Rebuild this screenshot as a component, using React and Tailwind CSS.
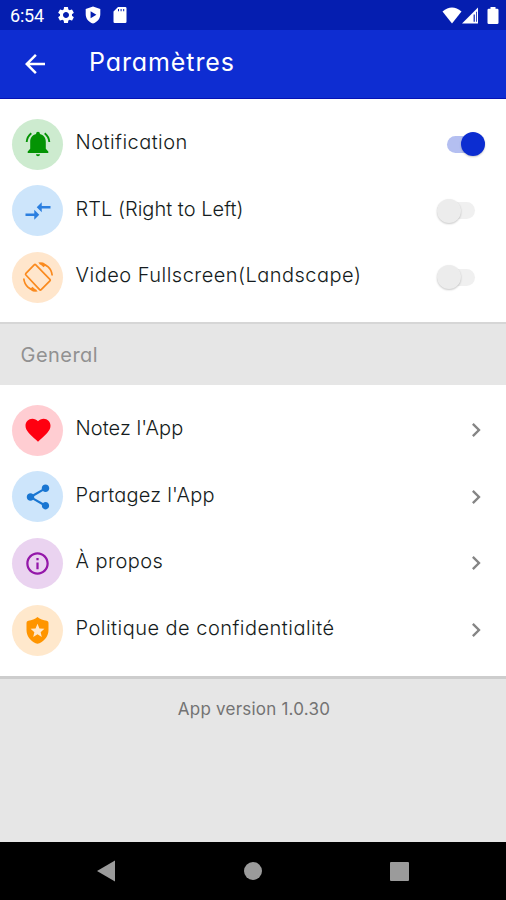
import React, { useState } from 'react';
import {
    MdArrowBack,
    MdChevronRight,
    MdCompareArrows,
    MdFavorite,
    MdInfoOutline,
    MdSettings,
    MdShare,
} from 'react-icons/md';

function BellRing() {
    return (
        <svg width="30" height="30" viewBox="0.5 0 30 30" fill="currentColor">
            <path d="M15.500 2.800c1.100 0 1.900.8 1.900 1.900v.4c3.700.9 5.900 3.900 5.900 7.600v7l2.500 2.800v1.400H5.200v-1.400l2.500-2.800v-7c0-3.700 2.200-6.700 5.900-7.600v-.4c0-1.100.8-1.900 1.900-1.900ZM13.500 25.200h4c0 1.200-.9 2-2 2s-2-.8-2-2Z" />
            <path d="M8.800 4.300C6.300 6.300 4.500 9.500 4.200 13M22.200 4.300C24.700 6.300 26.500 9.500 26.800 13" fill="none" stroke="currentColor" strokeWidth="1.900" />
        </svg>
    );
}

function RotateScreen() {
    return (
        <svg width="30" height="30" viewBox="0 0 30 30" fill="none" stroke="currentColor" strokeWidth="1.700">
            <path d="M11.200 2.900Q12 2.100 12.800 2.900L26.900 17.300Q27.700 18.100 26.900 18.900L18.200 27.600Q17.400 28.400 16.600 27.600L2.900 13Q2.100 12.200 2.900 11.400Z" strokeLinejoin="round" />
            <path d="M16.500 1.400C23.200 1.600 28.600 6.500 29.200 13.500M13.500 28.600C6.800 28.400 1.400 23.500.8 16.500" />
            <path d="M15.200.5h5l2.600 2.600-2.200 2.200Z M14.800 29.500h-5l-2.600-2.600 2.200-2.200Z" fill="currentColor" stroke="none" />
        </svg>
    );
}

function ShieldStar() {
    return (
        <svg width="29" height="29" viewBox="0 0 24 24" fill="currentColor">
            <path
                fillRule="evenodd"
                d="M12 .9C9.800 2.700 7.300 3.600 4.400 3.900Q2.900 4.100 2.900 5.600V11.500c0 5 3.200 9 7.500 11Q12 23.300 13.600 22.500c4.300-2 7.500-6 7.500-11V5.600Q21.100 4.100 19.600 3.900C16.700 3.600 14.200 2.700 12 .9ZM12 6.500l1.600 3.800 4.100.35-3.100 2.700.95 4L12 15.200l-3.550 2.150.95-4-3.100-2.700 4.100-.35Z"
            />
        </svg>
    );
}

function StatusBar() {
    return (
        <div className="flex h-[30px] shrink-0 items-center bg-[#051eb0] pl-[10px] pr-[6px] text-white">
            <span className="w-[46px] pt-[2px] font-['Roboto',sans-serif] text-[18px] leading-none tracking-[-0.2px]">6:54</span>
            <MdSettings size={20} />
            <svg width="16" height="18" viewBox="0 0 16 18" className="ml-[9px]" fill="currentColor">
                <path fillRule="evenodd" d="M8 .5 15.300 3v5.200c0 4.200-2.800 7.800-7.300 9.300C3.500 16 .7 12.400.7 8.200V3ZM5.600 5.200v7L11.400 8.700Z" />
            </svg>
            <svg width="14" height="16" viewBox="0 0 14 16" className="ml-[12px]" fill="currentColor">
                <path fillRule="evenodd" d="M5 0h7.200Q13.500 0 13.500 1.300v13.400Q13.500 16 12.200 16H1.800Q.5 16 .5 14.700V4.500ZM5 2v2.200h1V2ZM7.600 2v2.200h1V2ZM10.200 2v2.200h1V2Z" />
            </svg>
            <div className="ml-auto flex items-center">
                <svg width="20" height="17" viewBox="0 0 20 17" fill="currentColor">
                    <path d="M.5 4.500Q10-3.500 19.500 4.500L10 16.500Z" />
                </svg>
                <svg width="17" height="17" viewBox="0 0 17 17" fill="currentColor">
                    <path fillRule="evenodd" d="M0 16.500 16 .5v16ZM11.600 7.500v7.200h1.200V7.500ZM14 4.800v9.900h.8V4.800Z" />
                </svg>
                <svg width="12" height="17" viewBox="0 0 12 17" className="ml-[8px] mr-px" fill="currentColor">
                    <path d="M3.500 0h5v1.700h1.700q1.300 0 1.300 1.300v12.700q0 1.300-1.300 1.300H1.800Q.5 17 .5 15.700V3q0-1.300 1.300-1.300h1.700Z" />
                </svg>
            </div>
        </div>
    );
}

function Toggle({ checked, onChange }) {
    return (
        <button
            type="button"
            role="switch"
            aria-checked={checked}
            onClick={() => onChange(!checked)}
            className={`mr-[21px] flex h-6 w-[49px] items-center ${checked ? 'justify-end' : 'justify-start'}`}
        >
            <span className={`flex h-[17px] w-[38px] items-center rounded-full ${checked ? 'justify-end bg-[#b4bff1]' : 'ml-px justify-start bg-[#f0f0f0]'}`}>
                <span className={`h-6 w-6 shrink-0 rounded-full shadow-[0_1px_2px_rgba(0,0,0,0.22)] ${checked ? 'bg-[#0c2dd1]' : 'bg-[#ececec]'}`} />
            </span>
        </button>
    );
}

function Row({ icon, circle, label, labelClass, children }) {
    return (
        <div className="flex h-[66.6px] items-center pl-3">
            <div className={`flex h-[51px] w-[51px] items-center justify-center rounded-full ${circle}`}>
                {icon}
            </div>
            <span className={`mb-1 ml-[12.6px] whitespace-nowrap text-[20px] font-light leading-6 text-[#151c20] ${labelClass}`}>
                {label}
            </span>
            <div className="ml-auto flex">{children}</div>
        </div>
    );
}

const LINKS = [
    { label: "Notez l'App", labelClass: 'tracking-[0.05px]', circle: 'bg-[#ffcdd2] text-[#ff0010]', icon: <MdFavorite size={30} /> },
    { label: "Partagez l'App", labelClass: 'tracking-[0.22px]', circle: 'bg-[#cde5fb] text-[#1976d2]', icon: <MdShare size={30} /> },
    { label: 'À propos', labelClass: 'tracking-[0.45px]', circle: 'bg-[#ead3f0] text-[#9417a9]', icon: <MdInfoOutline size={27} /> },
    { label: 'Politique de confidentialité', labelClass: 'tracking-[0.47px]', circle: 'bg-[#ffe8cc] text-[#ff9500]', icon: <ShieldStar /> },
];

export default function App() {
    const [notifications, setNotifications] = useState(true);
    const [rtl, setRtl] = useState(false);
    const [landscape, setLandscape] = useState(false);

    return (
        <div className="flex h-[900px] w-[506px] flex-col overflow-hidden bg-[#e6e6e6] font-['Inter',sans-serif] [font-feature-settings:'cv11']">
            <StatusBar />
            <header className="flex h-[69px] shrink-0 items-center border-b border-[#0612b4] bg-[#0e2dd2] pl-5 text-white">
                <MdArrowBack size={30} />
                <h1 className="mb-1 ml-[39px] text-[25px] leading-8 tracking-[0.9px]">Paramètres</h1>
            </header>

            <section className="h-[223px] shrink-0 bg-white pt-3">
                <Row label="Notification" labelClass="tracking-[0.45px]" circle="bg-[#cdebcf] text-[#049404]" icon={<BellRing />}>
                    <Toggle checked={notifications} onChange={setNotifications} />
                </Row>
                <Row label="RTL (Right to Left)" labelClass="tracking-[0.02px]" circle="bg-[#cde5fb] text-[#2b7fe0]" icon={<MdCompareArrows size={30} />}>
                    <Toggle checked={rtl} onChange={setRtl} />
                </Row>
                <Row label="Video Fullscreen(Landscape)" labelClass="tracking-[0.48px]" circle="bg-[#ffe6cc] text-[#fa8a1e]" icon={<RotateScreen />}>
                    <Toggle checked={landscape} onChange={setLandscape} />
                </Row>
            </section>

            <div className="flex h-[63px] shrink-0 items-center border-t-2 border-[#d6d6d6] pl-[20.6px] text-[20px] tracking-[0.45px] text-[#919191]">
                General
            </div>

            <section className="h-[291px] shrink-0 bg-white pt-3">
                {LINKS.map(({ label, ...rest }) => (
                    <Row key={label} label={label} {...rest}>
                        <MdChevronRight size={28} className="mr-4 text-[#858585]" />
                    </Row>
                ))}
            </section>

            <div className="flex-1 border-t-[3px] border-[#cdcdcd] pl-[2px] pt-[18px] text-center text-[17px] leading-6 tracking-[0.22px] text-[#737373]">
                <span>App version 1.0.30</span>
            </div>

            <nav className="flex h-[58px] shrink-0 items-center justify-between bg-black pl-[97px] pr-[97px] text-[#9b9b9b]">
                <svg width="18" height="22" viewBox="0 0 18 22" fill="currentColor">
                    <path d="M18 .5v21L0 11Z" />
                </svg>
                <span className="h-[18px] w-[18px] rounded-full bg-[#9b9b9b]" />
                <span className="h-[19px] w-[19px] rounded-[1px] bg-[#9b9b9b]" />
            </nav>
        </div>
    );
}
